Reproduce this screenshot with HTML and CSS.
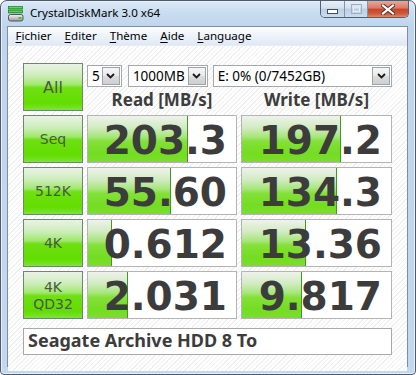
FILE: index.html
```html
<!DOCTYPE html>
<html>
<head>
<meta charset="utf-8">
<link rel="stylesheet" href="styles.css">
</head>
<body>
<div class="window">
  <div class="titlebar">
    <svg class="app-icon" width="16" height="16" viewBox="0 0 16 16">
      <defs>
        <linearGradient id="gb" x1="0" y1="0" x2="0" y2="1">
          <stop offset="0" stop-color="#8ef07a"/>
          <stop offset="1" stop-color="#1faa2a"/>
        </linearGradient>
        <linearGradient id="dk" x1="0" y1="0" x2="0" y2="1">
          <stop offset="0" stop-color="#f4f4f4"/>
          <stop offset="1" stop-color="#9a9a9a"/>
        </linearGradient>
      </defs>
      <rect x="0.5" y="0.5" width="14" height="2.6" fill="url(#gb)" stroke="#1d8a22" stroke-width="0.8"/>
      <rect x="0.5" y="4.3" width="14" height="2.6" fill="url(#gb)" stroke="#1d8a22" stroke-width="0.8"/>
      <rect x="0.5" y="8.5" width="14.5" height="6.5" rx="2" fill="url(#dk)" stroke="#555" stroke-width="1"/>
      <rect x="10.5" y="11" width="3" height="2" fill="#2fcf2f"/>
    </svg>
    <span class="title">CrystalDiskMark 3.0 x64</span>
    <div class="caption-buttons">
      <div class="cb cb-min">
        <svg width="11" height="5" viewBox="0 0 11 5"><rect x="0.5" y="0.5" width="10" height="4" fill="#fff" stroke="#3b4c63"/></svg>
      </div>
      <div class="cb cb-max">
        <svg width="11" height="10" viewBox="0 0 11 10"><rect x="0.5" y="0.5" width="10" height="9" fill="none" stroke="#9fb0c4"/><rect x="2.5" y="3" width="6" height="4.5" fill="none" stroke="#e8eef6"/></svg>
      </div>
      <div class="cb cb-close">
        <svg width="14" height="11" viewBox="0 0 14 11">
          <path d="M2 1.5 L12 9.5 M12 1.5 L2 9.5" stroke="#4a3430" stroke-width="4" stroke-linecap="square"/>
          <path d="M2 1.5 L12 9.5 M12 1.5 L2 9.5" stroke="#fff" stroke-width="2.2" stroke-linecap="square"/>
        </svg>
      </div>
    </div>
  </div>
  <div class="inner">
    <div class="menubar">
      <span class="menu-item"><u>F</u>ichier</span>
      <span class="menu-item"><u>E</u>diter</span>
      <span class="menu-item"><u>T</u>hème</span>
      <span class="menu-item"><u>A</u>ide</span>
      <span class="menu-item"><u>L</u>anguage</span>
    </div>
    <div class="client">
      <div class="grid">
        <div class="test-btn btn-all">All</div>
        <div class="controls">
          <div class="selects">
            <div class="combo combo-count"><span class="combo-text">5</span><span class="combo-arrow"><svg width="9" height="6" viewBox="0 0 9 6"><path d="M1 1 L4.5 4.5 L8 1" fill="none" stroke="#1a1a1a" stroke-width="1.8"/></svg></span></div>
            <div class="combo combo-size"><span class="combo-text">1000MB</span><span class="combo-arrow"><svg width="9" height="6" viewBox="0 0 9 6"><path d="M1 1 L4.5 4.5 L8 1" fill="none" stroke="#1a1a1a" stroke-width="1.8"/></svg></span></div>
            <div class="combo combo-drive"><span class="combo-text">E: 0% (0/7452GB)</span><span class="combo-arrow"><svg width="9" height="6" viewBox="0 0 9 6"><path d="M1 1 L4.5 4.5 L8 1" fill="none" stroke="#1a1a1a" stroke-width="1.8"/></svg></span></div>
          </div>
          <div class="headers">
            <div class="head">Read [MB/s]</div>
            <div class="head">Write [MB/s]</div>
          </div>
        </div>

        <div class="test-btn">Seq</div>
        <div class="meter"><div class="bar" style="width:99px"></div><span class="value">203.3</span></div>
        <div class="meter"><div class="bar" style="width:98px"></div><span class="value">197.2</span></div>

        <div class="test-btn">512K</div>
        <div class="meter"><div class="bar" style="width:82px"></div><span class="value">55.60</span></div>
        <div class="meter"><div class="bar" style="width:94px"></div><span class="value">134.3</span></div>

        <div class="test-btn">4K</div>
        <div class="meter"><div class="bar" style="width:23px"></div><span class="value">0.612</span></div>
        <div class="meter"><div class="bar" style="width:63px"></div><span class="value">13.36</span></div>

        <div class="test-btn two-line">4K<br>QD32</div>
        <div class="meter"><div class="bar" style="width:39px"></div><span class="value">2.031</span></div>
        <div class="meter"><div class="bar" style="width:59px"></div><span class="value">9.817</span></div>

        <div class="comment">Seagate Archive HDD 8 To</div>
      </div>
    </div>
  </div>
</div>
</body>
</html>
```

FILE: styles.css
```css
html, body {
  margin: 0;
  padding: 0;
  width: 416px;
  height: 375px;
  overflow: hidden;
  background: #fff;
}

.window {
  box-sizing: border-box;
  width: 416px;
  height: 375px;
  display: flex;
  flex-direction: column;
  border: 1px solid #4d5b6d;
  border-radius: 7px 7px 4px 4px;
  background: linear-gradient(to bottom, #dce9f6 0px, #c9dcf0 12px, #c0d5ec 26px, #c3d8ee 100%);
  box-shadow: inset 0 0 0 1px #e7f0fa;
}

.titlebar {
  height: 25px;
  display: flex;
  align-items: flex-start;
  flex: none;
}

.app-icon {
  margin: 5px 0 0 7px;
  flex: none;
}

.title {
  margin: 4px 0 0 6px;
  font-family: "Noto Sans", "Open Sans", sans-serif;
  font-size: 11.6px;
  line-height: 16px;
  color: #000;
}

.caption-buttons {
  margin-left: auto;
  margin-right: 6px;
  display: flex;
  height: 17px;
  border: 1px solid #4f6077;
  border-top: none;
  border-radius: 0 0 5px 5px;
  overflow: hidden;
  box-sizing: border-box;
}

.cb {
  display: flex;
  align-items: center;
  justify-content: center;
  height: 100%;
  background: linear-gradient(to bottom, #e6eef7 0%, #d3e0ee 45%, #bccee3 50%, #cadcef 100%);
}

.cb-min {
  width: 23px;
  border-right: 1px solid #8194ab;
}

.cb-min svg {
  margin-top: 5px;
}

.cb-max {
  width: 22px;
  border-right: 1px solid #8194ab;
}

.cb-close {
  width: 40px;
  background: linear-gradient(to bottom, #e9a797 0%, #d77a62 45%, #c5452b 50%, #cf5a3c 80%, #e08a6c 100%);
}

.inner {
  flex: 1;
  margin: 0 7px 7px 6px;
  border: 1px solid #7d8fa6;
  display: flex;
  flex-direction: column;
  min-height: 0;
}

.menubar {
  height: 19px;
  flex: none;
  display: flex;
  align-items: center;
  padding-left: 1px;
  background: linear-gradient(to bottom, #fbfcfe 0%, #eef3fa 50%, #dfe8f4 100%);
  border-bottom: 1px solid #e6ecf4;
  box-sizing: border-box;
}

.menu-item {
  font-family: "Noto Sans", "Open Sans", sans-serif;
  font-size: 11.6px;
  line-height: 16px;
  color: #000;
  padding: 0 6.5px;
}

.menu-item u {
  text-decoration-thickness: 1px;
  text-underline-offset: 2px;
}

.client {
  flex: 1;
  padding: 17px 15px 0 15px;
  background-color: #fff;
  background-image: repeating-linear-gradient(135deg, #ffffff 0px, #ffffff 2.2px, #f0f0f0 2.2px, #f0f0f0 3.2px);
}

.grid {
  display: grid;
  grid-template-columns: 60px 150px 151px;
  grid-auto-rows: 48px;
  column-gap: 4px;
  row-gap: 4px;
}

.test-btn {
  box-sizing: border-box;
  border: 1px solid #71876a;
  background: linear-gradient(to bottom, #eaf2e6 0%, #cdeebb 25%, #9fe86c 45%, #6fe012 52%, #62dd00 85%, #7ee432 100%);
  display: flex;
  align-items: center;
  justify-content: center;
  text-align: center;
  font-family: "DejaVu Sans", Verdana, sans-serif;
  font-size: 14px;
  line-height: 17px;
  color: #4b5846;
}

.btn-all {
  font-size: 16px;
}

.two-line {
  padding-top: 1px;
}

.controls {
  grid-column: 2 / 4;
  display: flex;
  flex-direction: column;
}

.selects {
  display: flex;
  margin-top: 2px;
  height: 22px;
}

.combo {
  box-sizing: border-box;
  height: 22px;
  border: 1px solid #a6a9ae;
  background: #fff;
  display: flex;
  align-items: center;
  padding: 1px;
}

.combo-count { width: 35px; }
.combo-size { width: 80px; margin-left: 6px; }
.combo-drive { width: 180px; margin-left: 5px; }

.combo-text {
  flex: 1;
  padding-left: 3px;
  font-family: "Noto Sans", "Open Sans", sans-serif;
  font-size: 13.5px;
  line-height: 18px;
  color: #000;
  white-space: nowrap;
}

.combo-arrow {
  box-sizing: border-box;
  width: 18px;
  height: 18px;
  border: 1px solid #9da3ab;
  background: linear-gradient(to bottom, #f6f6f6 0%, #e9e9e9 50%, #dcdcdc 51%, #cfcfcf 100%);
  display: flex;
  align-items: center;
  justify-content: center;
}

.headers {
  display: grid;
  grid-template-columns: 150px 151px;
  column-gap: 4px;
  margin-top: 2px;
}

.head {
  text-align: center;
  font-family: "Noto Sans", "Open Sans", sans-serif;
  font-weight: bold;
  font-size: 17px;
  line-height: 22px;
  color: #3d3d3d;
}

.meter {
  position: relative;
  box-sizing: border-box;
  border: 1px solid #b4b4b4;
  background: #fff;
  text-align: right;
  padding: 3px 9px 0 0;
}

.bar {
  position: absolute;
  left: 0;
  top: 0;
  bottom: 0;
  border-right: 1px solid #3f9a1e;
  background: linear-gradient(to bottom, #eef2ec 0%, #d2ecc2 25%, #a8e67c 45%, #84e03a 55%, #74dd22 80%, #7ade2c 100%);
}

.value {
  position: relative;
  font-family: "DejaVu Sans", Verdana, sans-serif;
  font-weight: bold;
  font-size: 39px;
  line-height: 43px;
  color: #3c3c3c;
}

.comment {
  grid-column: 1 / 4;
  height: 27px;
  margin-top: 5px;
  box-sizing: border-box;
  border: 1px solid #a9a9a9;
  background: #fff;
  padding-left: 4px;
  font-family: "Noto Sans", "Open Sans", sans-serif;
  font-weight: bold;
  font-size: 18px;
  line-height: 23px;
  color: #3c3c3c;
}
```
